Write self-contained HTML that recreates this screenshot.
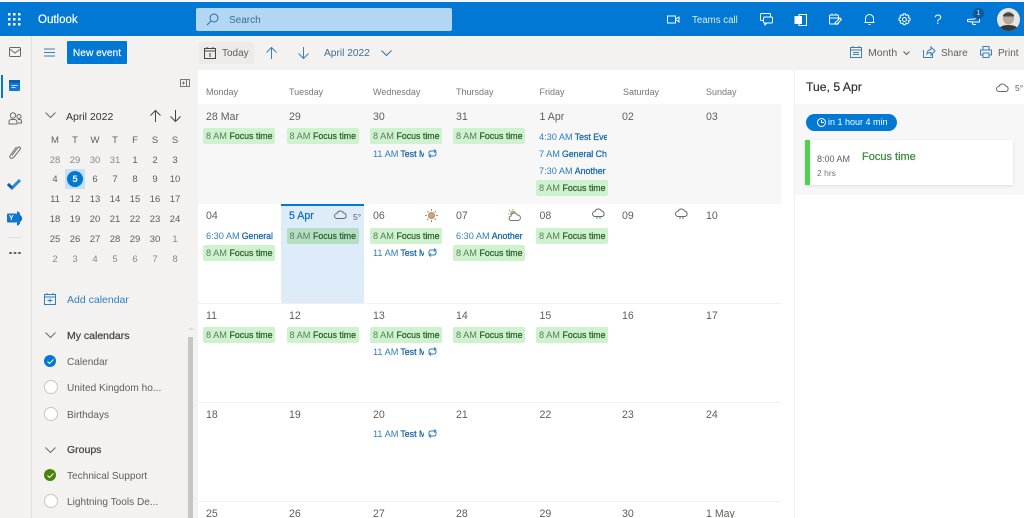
<!DOCTYPE html>
<html><head><meta charset="utf-8"><style>
html,body{margin:0;padding:0}
body{width:1024px;height:518px;overflow:hidden;position:relative;background:#fff;font-family:"Liberation Sans",sans-serif;color:#605e5c}
#w{position:absolute;inset:0;overflow:hidden;filter:blur(.3px)}
.a,.t,.c,.d,.f,.e,.h{position:absolute;white-space:nowrap}
.t{font-size:10.5px;line-height:14px}
.c{width:20px;text-align:center;font-size:9.5px;line-height:12px;color:#605e5c;margin-top:2px}
.c.m{color:#8a8886}
.d{font-size:10.6px;line-height:14px;color:#605e5c;margin-top:1px}
.h{font-size:9px;line-height:12px;color:#797775}
.f{width:72px;height:16px;background:#cef2ce;border-radius:2px;font-size:9.2px;line-height:16px;color:#5d7d5d;padding-left:3px;box-sizing:border-box;overflow:hidden}
.f b{font-weight:400;font-size:8.8px;color:#2b5d2b;-webkit-text-stroke:.25px #2b5d2b;margin-left:0}
.e{font-size:9.2px;line-height:14px;color:#2f7fbf;width:68px;overflow:hidden}
.e b{font-weight:400;font-size:8.8px;color:#1565a5;-webkit-text-stroke:.25px #1565a5;margin-left:2px}
svg{position:absolute;overflow:visible;fill:none}
.w{stroke:#fff;stroke-width:1}
.g{stroke:#6b6967;stroke-width:1}
.b{stroke:#3a7fb5;stroke-width:1}
.r{width:12px;height:12px;border-radius:50%;position:absolute;left:44px;background:#fff;border:1px solid #c8c6c4}
</style></head><body><div id="w">
<!-- top bar -->
<div class="a" style="left:0;top:0;width:1024px;height:2px;background:#f4f8fc"></div>
<div class="a" style="left:0;top:2px;width:1024px;height:34px;background:#0078d4"></div>
<svg style="left:8px;top:13px" width="12" height="12"><g fill="#fff"><rect x="0" y="0" width="2.500" height="2.500"/><rect x="5" y="0" width="2.500" height="2.500"/><rect x="10" y="0" width="2.500" height="2.500"/><rect x="0" y="5" width="2.500" height="2.500"/><rect x="5" y="5" width="2.500" height="2.500"/><rect x="10" y="5" width="2.500" height="2.500"/><rect x="0" y="10" width="2.500" height="2.500"/><rect x="5" y="10" width="2.500" height="2.500"/><rect x="10" y="10" width="2.500" height="2.500"/></g></svg>
<div class="t" style="left:38px;top:13px;font-size:11.5px;color:#fff;-webkit-text-stroke:.2px #fff">Outlook</div>
<div class="a" style="left:196px;top:8px;width:256px;height:23px;background:#b3d6f2;border-radius:2px"></div>
<svg style="left:206px;top:13px" width="13" height="13" stroke="#2a6ea8"><circle cx="8" cy="5" r="4"/><path d="M5 8L1 12"/></svg>
<div class="t" style="left:229px;top:12px;font-size:10px;line-height:14px;margin-top:2px;color:#33709f">Search</div>
<svg style="left:667px;top:15px" width="13" height="9" class="w"><rect x=".5" y="1" width="8" height="7"/><path d="M9 4l3-2v5l-3-2"/></svg>
<div class="t" style="left:692px;top:14px;font-size:9.700px;color:#dcecf9">Teams call</div>
<svg style="left:760px;top:13px" width="13" height="13" class="w"><rect x=".5" y=".5" width="10" height="7" rx="1"/><rect x="3.500" y="4" width="9" height="6" rx="1" fill="#0078d4"/><path d="M5 10v2l2-2"/></svg>
<svg style="left:795px;top:14px" width="12" height="12" class="w"><rect x="4" y=".5" width="7.500" height="11"/><rect x="0" y="2.500" width="6.500" height="7" fill="#fff"/></svg>
<svg style="left:829px;top:13px" width="13" height="13" class="w"><rect x=".5" y="2" width="9" height="9" rx="1"/><path d="M.5 5h9M3 .5v2M7 .5v2"/><path d="M6 10l5-5 1.500 1.500-5 5z" fill="#0078d4"/></svg>
<svg style="left:864px;top:13px" width="11" height="13" class="w"><path d="M1.500 9.500V5.500a4 4 0 018 0v4zM.5 9.500h10M4.500 11.500h2"/></svg>
<svg style="left:898px;top:13px" width="13" height="13" class="w"><circle cx="6.500" cy="6.500" r="2"/><path d="M5.500 .7h2l.5 1.700 1.600-.7 1.400 1.400-.7 1.600 1.700.5v2l-1.700.5.7 1.600-1.400 1.400-1.600-.7-.5 1.700h-2l-.5-1.700-1.600.7-1.400-1.400.7-1.600-1.700-.5v-2l1.700-.5-.7-1.600 1.400-1.400 1.600.7z"/></svg>
<div class="t" style="left:934px;top:12px;font-size:14px;color:#e6f2fb">?</div>
<svg style="left:967px;top:15px" width="14" height="10" class="w"><path d="M.5 4.500l7-.5 5-3v6H7L.5 6.500zM5 7.500l1 2h3"/></svg>
<div class="a" style="left:973px;top:8px;width:11px;height:11px;border-radius:50%;background:#0f5a96;color:#e6f2fb;font-size:7px;line-height:11px;text-align:center">1</div>
<svg style="left:997px;top:8px" width="23" height="23"><defs><clipPath id="av"><circle cx="11.500" cy="11.500" r="11.500"/></clipPath></defs><g clip-path="url(#av)"><rect width="23" height="23" fill="#e8e6e4"/><ellipse cx="11.500" cy="10" rx="5.500" ry="6.500" fill="#b5a89f"/><path d="M6 7q5.500-5 11 0v1.500H6z" fill="#4a4644"/><path d="M1 23q1-6 10.500-6T22 23z" fill="#3a3836"/></g></svg>

<!-- toolbar / background -->
<div class="a" style="left:0;top:36px;width:1024px;height:482px;background:#f3f2f1"></div>
<div class="a" style="left:31px;top:36px;width:1px;height:482px;background:#e1dfdd"></div>

<!-- rail -->
<svg style="left:9px;top:47px" width="12" height="11" class="g"><rect x=".5" y=".5" width="11" height="9" rx="1"/><path d="M.5 2l5.500 4 5.500-4"/></svg>
<div class="a" style="left:1px;top:75px;width:2px;height:23px;background:#0078d4"></div>
<svg style="left:9px;top:80px" width="11" height="12"><rect x="0" y="0" width="11" height="11" rx="1" fill="#0f78d4"/><rect x="0" y="0" width="11" height="3" fill="#0a5fb0"/><path d="M2.500 5.500h6M2.500 7.500h4" stroke="#cfe6fa" stroke-width="1"/></svg>
<svg style="left:8px;top:112px" width="14" height="13" class="g"><circle cx="5" cy="3.500" r="2.700"/><circle cx="11" cy="4.500" r="2"/><path d="M1 12V10q0-2.500 2.500-2.500h3Q9 7.500 9 10v2zM10 7.500h1.500q2 0 2 2V11H10"/></svg>
<svg style="left:9px;top:145px" width="12" height="14" class="g"><path d="M3 10.500l5.500-7.500q1.500-1.800 2.500-.8t-.3 2.600L5 12q-2 2-3.500 1T1.500 10L7.500 2"/></svg>
<svg style="left:7px;top:178px" width="15" height="12"><path d="M1 6l4 4 8-8" stroke="#2b88d8" stroke-width="3"/><path d="M1 6l4 4" stroke="#0f5fae" stroke-width="3"/></svg>
<svg style="left:7px;top:211px" width="16" height="15"><circle cx="11" cy="7.500" r="4" fill="#0a5fb0"/><path d="M10 0l3 2v11l-3 2z" fill="#0f78d4"/><rect x="0" y="2.500" width="10" height="9" rx="1" fill="#0f78d4"/></svg>
<div class="a" style="top:213px;color:#fff;font-size:7px;line-height:12px;font-weight:bold;left:9px">Y</div>
<div class="a" style="left:8px;top:237px;width:14px;height:1px;background:#e1dfdd"></div>
<div class="a" style="left:9px;top:252px;width:3px;height:2px;background:#605e5c;box-shadow:4.500px 0 #605e5c,9px 0 #605e5c;border-radius:1px"></div>

<!-- sidebar -->
<svg style="left:44px;top:48px" width="12" height="9" stroke="#3a7fb5"><path d="M0 1h11M0 4.500h11M0 8h11"/></svg>
<div class="a" style="left:67px;top:41px;width:60px;height:23px;background:#0078d4;border-radius:1px"></div>
<div class="a" style="left:67px;top:43px;width:60px;height:21px;color:#fff;font-size:10.200px;line-height:21px;text-align:center;-webkit-text-stroke:.15px #fff">New event</div>
<svg style="left:180px;top:79px" width="10" height="8" stroke="#797775"><rect x=".5" y=".5" width="9" height="7"/><path d="M6.500 .5v7M2 4h3M3.500 2.500v3"/></svg>
<svg style="left:45px;top:112px" width="11" height="6" class="g"><path d="M.5 .5l5 5 5-5"/></svg>
<div class="t" style="left:66px;top:110px;font-size:10.500px;color:#323130">April 2022</div>
<svg style="left:150px;top:110px" width="11" height="12" stroke="#484644"><path d="M5.500 12V.5M.5 5.500l5-5 5 5"/></svg>
<svg style="left:170px;top:110px" width="11" height="12" stroke="#484644"><path d="M5.500 0v11.500M.5 6.500l5 5 5-5"/></svg>
<div class="c" style="left:45px;top:133px">M</div><div class="c" style="left:65px;top:133px">T</div><div class="c" style="left:85px;top:133px">W</div><div class="c" style="left:105px;top:133px">T</div><div class="c" style="left:125px;top:133px">F</div><div class="c" style="left:145px;top:133px">S</div><div class="c" style="left:165px;top:133px">S</div>
<div class="c m" style="left:45px;top:153px">28</div><div class="c m" style="left:65px;top:153px">29</div><div class="c m" style="left:85px;top:153px">30</div><div class="c m" style="left:105px;top:153px">31</div><div class="c" style="left:125px;top:153px">1</div><div class="c" style="left:145px;top:153px">2</div><div class="c" style="left:165px;top:153px">3</div>
<div class="a" style="left:65px;top:169px;width:20px;height:20px;background:#c7e0f4;border:0"></div>
<div class="a" style="left:67px;top:171px;width:16px;height:16px;border-radius:50%;background:#0078d4"></div>
<div class="c" style="left:45px;top:172px">4</div><div class="c" style="left:65px;top:172px;color:#fff;font-weight:bold">5</div><div class="c" style="left:85px;top:172px">6</div><div class="c" style="left:105px;top:172px">7</div><div class="c" style="left:125px;top:172px">8</div><div class="c" style="left:145px;top:172px">9</div><div class="c" style="left:165px;top:172px">10</div>
<div class="c" style="left:45px;top:192px">11</div><div class="c" style="left:65px;top:192px">12</div><div class="c" style="left:85px;top:192px">13</div><div class="c" style="left:105px;top:192px">14</div><div class="c" style="left:125px;top:192px">15</div><div class="c" style="left:145px;top:192px">16</div><div class="c" style="left:165px;top:192px">17</div>
<div class="c" style="left:45px;top:212px">18</div><div class="c" style="left:65px;top:212px">19</div><div class="c" style="left:85px;top:212px">20</div><div class="c" style="left:105px;top:212px">21</div><div class="c" style="left:125px;top:212px">22</div><div class="c" style="left:145px;top:212px">23</div><div class="c" style="left:165px;top:212px">24</div>
<div class="c" style="left:45px;top:232px">25</div><div class="c" style="left:65px;top:232px">26</div><div class="c" style="left:85px;top:232px">27</div><div class="c" style="left:105px;top:232px">28</div><div class="c" style="left:125px;top:232px">29</div><div class="c" style="left:145px;top:232px">30</div><div class="c m" style="left:165px;top:232px">1</div>
<div class="c m" style="left:45px;top:252px">2</div><div class="c m" style="left:65px;top:252px">3</div><div class="c m" style="left:85px;top:252px">4</div><div class="c m" style="left:105px;top:252px">5</div><div class="c m" style="left:125px;top:252px">6</div><div class="c m" style="left:145px;top:252px">7</div><div class="c m" style="left:165px;top:252px">8</div>
<svg style="left:44px;top:293px" width="12" height="12" stroke="#2f7fbf"><rect x=".5" y="1.500" width="11" height="10"/><path d="M.5 4h11M3 0v2M9 0v2M3.500 7.500h5M6 5.500v4"/></svg>
<div class="t" style="left:67px;top:293px;font-size:10.500px;color:#2f7fbf">Add calendar</div>
<svg style="left:45px;top:332px" width="11" height="6" class="g"><path d="M.5 .5l5 5 5-5"/></svg>
<div class="t" style="left:67px;top:329px;font-size:10.500px;color:#484644;-webkit-text-stroke:.25px #484644">My calendars</div>
<div class="a" style="left:44px;top:355px;width:12px;height:12px;border-radius:50%;background:#0078d4"></div>
<svg style="left:47px;top:359px" width="7" height="5" stroke="#fff"><path d="M.5 2.500l2 2 4-4"/></svg>
<div class="t" style="left:67px;top:356px;font-size:10.100px">Calendar</div>
<div class="r" style="top:380px"></div>
<div class="t" style="left:67px;top:382px;font-size:10.100px">United Kingdom ho...</div>
<div class="r" style="top:407px"></div>
<div class="t" style="left:67px;top:409px;font-size:10.100px">Birthdays</div>
<svg style="left:45px;top:447px" width="11" height="6" class="g"><path d="M.5 .5l5 5 5-5"/></svg>
<div class="t" style="left:67px;top:443px;font-size:10.500px;color:#484644;-webkit-text-stroke:.25px #484644">Groups</div>
<div class="a" style="left:44px;top:469px;width:12px;height:12px;border-radius:50%;background:#498205"></div>
<svg style="left:47px;top:473px" width="7" height="5" stroke="#fff"><path d="M.5 2.500l2 2 4-4"/></svg>
<div class="t" style="left:67px;top:470px;font-size:10.100px">Technical Support</div>
<div class="r" style="top:494px"></div>
<div class="t" style="left:67px;top:496px;font-size:10.100px">Lightning Tools De...</div>
<div class="a" style="left:188px;top:337px;width:5px;height:181px;background:#c8c6c4"></div>
<svg style="left:188px;top:326px" width="6" height="4"><path d="M0 4l3-3 3 3z" fill="#dcdad8"/></svg>

<!-- calendar toolbar -->
<div class="a" style="left:199px;top:42px;width:55px;height:22px;background:#edebe9"></div>
<svg style="left:204px;top:47px" width="12" height="12" stroke="#484644"><rect x=".5" y="1.500" width="11" height="10"/><path d="M.5 4h11M3 0v2M9 0v2M6 6v4"/></svg>
<div class="t" style="left:222px;top:47px;font-size:10px;color:#605e5c">Today</div>
<svg style="left:266px;top:47px" width="11" height="12" stroke="#3a7fb5"><path d="M5.500 12V.5M.5 5.500l5-5 5 5"/></svg>
<svg style="left:298px;top:47px" width="11" height="12" stroke="#3a7fb5"><path d="M5.500 0v11.500M.5 6.500l5 5 5-5"/></svg>
<div class="t" style="left:324px;top:47px;font-size:10.200px;color:#3a6f9c">April 2022</div>
<svg style="left:381px;top:50px" width="11" height="6" stroke="#3a6f9c"><path d="M.5 .5l5 5 5-5"/></svg>
<svg style="left:850px;top:46px" width="12" height="12" stroke="#3a7fb5"><rect x=".5" y="1.500" width="11" height="10"/><path d="M.5 4h11M3 0v2M9 0v2M3 6.500h6M3 8.500h6"/></svg>
<div class="t" style="left:868px;top:46px;font-size:10.500px">Month</div>
<svg style="left:903px;top:51px" width="7" height="4" stroke="#605e5c"><path d="M.5 .5l3 3 3-3"/></svg>
<svg style="left:923px;top:46px" width="12" height="12" stroke="#3a7fb5"><path d="M.5 4v7.500h9V8M4 8q0-4 4-4.500V1l4 4-4 4V6.500q-3 0-4 1.500z"/></svg>
<div class="t" style="left:941px;top:47px;font-size:10px">Share</div>
<svg style="left:980px;top:46px" width="12" height="12" stroke="#3a7fb5"><path d="M3 4V.5h6V4M3 9H.5V4h11v5H9M3 7h6v4.500H3z"/></svg>
<div class="t" style="left:998px;top:47px;font-size:10px">Print</div>

<!-- calendar -->
<div class="a" style="left:198px;top:70px;width:596px;height:448px;background:#fff"></div>
<div class="a" style="left:198px;top:104px;width:583px;height:100px;background:#f8f7f7"></div>
<div class="a" style="left:198px;top:303px;width:583px;height:1px;background:#f1f0ef"></div>
<div class="a" style="left:198px;top:402px;width:583px;height:1px;background:#f1f0ef"></div>
<div class="a" style="left:198px;top:501px;width:583px;height:1px;background:#f1f0ef"></div>
<div class="a" style="left:281px;top:204px;width:83px;height:99px;background:#deecf9"></div>
<div class="a" style="left:281px;top:204px;width:83px;height:2px;background:#0078d4"></div>

<div class="h" style="left:206px;top:86px">Monday</div><div class="h" style="left:289px;top:86px">Tuesday</div><div class="h" style="left:373px;top:86px">Wednesday</div><div class="h" style="left:456px;top:86px">Thursday</div><div class="h" style="left:539.500px;top:86px">Friday</div><div class="h" style="left:623px;top:86px">Saturday</div><div class="h" style="left:706px;top:86px">Sunday</div>

<div class="d" style="left:206px;top:109px">28 Mar</div><div class="d" style="left:289px;top:109px">29</div><div class="d" style="left:373px;top:109px">30</div><div class="d" style="left:456px;top:109px">31</div><div class="d" style="left:539.500px;top:109px">1 Apr</div><div class="d" style="left:622px;top:109px">02</div><div class="d" style="left:706px;top:109px">03</div>
<div class="d" style="left:206px;top:208px">04</div><div class="d" style="left:289px;top:208px;color:#106ebe;-webkit-text-stroke:.25px #106ebe">5 Apr</div><div class="d" style="left:373px;top:208px">06</div><div class="d" style="left:456px;top:208px">07</div><div class="d" style="left:539.500px;top:208px">08</div><div class="d" style="left:622px;top:208px">09</div><div class="d" style="left:706px;top:208px">10</div>
<div class="d" style="left:206px;top:308px">11</div><div class="d" style="left:289px;top:308px">12</div><div class="d" style="left:373px;top:308px">13</div><div class="d" style="left:456px;top:308px">14</div><div class="d" style="left:539.500px;top:308px">15</div><div class="d" style="left:622px;top:308px">16</div><div class="d" style="left:706px;top:308px">17</div>
<div class="d" style="left:206px;top:407px">18</div><div class="d" style="left:289px;top:407px">19</div><div class="d" style="left:373px;top:407px">20</div><div class="d" style="left:456px;top:407px">21</div><div class="d" style="left:539.500px;top:407px">22</div><div class="d" style="left:622px;top:407px">23</div><div class="d" style="left:706px;top:407px">24</div>
<div class="d" style="left:206px;top:506px">25</div><div class="d" style="left:289px;top:506px">26</div><div class="d" style="left:373px;top:506px">27</div><div class="d" style="left:456px;top:506px">28</div><div class="d" style="left:539.500px;top:506px">29</div><div class="d" style="left:622px;top:506px">30</div><div class="d" style="left:706px;top:506px">1 May</div>

<!-- weather -->
<svg style="left:334px;top:210px" width="13" height="9" stroke="#6b6967"><path d="M3 8.500a2.500 2.500 0 010-5 3.500 3.500 0 016.500-.5 2.800 2.800 0 01.5 5.500z"/></svg>
<div class="t" style="left:353px;top:210px;font-size:8.500px">5°</div>
<svg style="left:425px;top:209px" width="13" height="13" stroke="#b09060"><circle cx="6.500" cy="6.500" r="3" fill="#c9a878"/><path d="M6.500 0v2M6.500 11v2M0 6.500h2M11 6.500h2M2 2l1.500 1.500M9.500 9.500L11 11M2 11l1.500-1.500M9.500 3.500L11 2"/></svg>
<svg style="left:508px;top:209px" width="14" height="12"><circle cx="5" cy="4.500" r="3" fill="#c9a878"/><path d="M5 0v1M1 1l1 1M0 5h1" stroke="#b09060"/><path d="M3 11.500a2.300 2.300 0 010-4.500 3.300 3.300 0 016.300-1 2.800 2.800 0 011 5.500z" stroke="#7a7876" fill="#fff"/></svg>
<svg style="left:592px;top:210px" width="13" height="11" stroke="#6b6967"><path d="M3 6.500a2.500 2.500 0 010-5 3.500 3.500 0 016.500-.5 2.800 2.800 0 01.5 5.500z"/><path d="M5 6v3M8 6v3" stroke="#2f7fbf"/></svg>
<svg style="left:675px;top:210px" width="13" height="11" stroke="#6b6967"><path d="M3 6.500a2.500 2.500 0 010-5 3.500 3.500 0 016.500-.5 2.800 2.800 0 01.5 5.500z"/><path d="M5 6v3M8 6v3" stroke="#2f7fbf"/></svg>

<!-- focus pills -->
<div class="f" style="left:203px;top:128px">8 AM <b>Focus time</b></div><div class="f" style="left:286.500px;top:128px">8 AM <b>Focus time</b></div><div class="f" style="left:370px;top:128px">8 AM <b>Focus time</b></div><div class="f" style="left:453px;top:128px">8 AM <b>Focus time</b></div><div class="f" style="left:536px;top:180px">8 AM <b>Focus time</b></div>
<div class="f" style="left:203px;top:245px">8 AM <b>Focus time</b></div><div class="f" style="left:286.500px;top:228px;background:#b4dfc4">8 AM <b>Focus time</b></div><div class="f" style="left:370px;top:228px">8 AM <b>Focus time</b></div><div class="f" style="left:453px;top:245px">8 AM <b>Focus time</b></div><div class="f" style="left:536px;top:228px">8 AM <b>Focus time</b></div>
<div class="f" style="left:203px;top:327px">8 AM <b>Focus time</b></div><div class="f" style="left:286.500px;top:327px">8 AM <b>Focus time</b></div><div class="f" style="left:370px;top:327px">8 AM <b>Focus time</b></div><div class="f" style="left:453px;top:327px">8 AM <b>Focus time</b></div><div class="f" style="left:536px;top:327px">8 AM <b>Focus time</b></div>

<!-- blue events -->
<div class="e" style="left:539px;top:129.500px">4:30 AM<b>Test Eve</b></div>
<div class="e" style="left:539px;top:147px">7 AM<b>General Ch</b></div>
<div class="e" style="left:539px;top:164px">7:30 AM<b>Another</b></div>
<div class="e" style="left:206px;top:229px">6:30 AM<b>General</b></div>
<div class="e" style="left:456px;top:229px">6:30 AM<b>Another</b></div>
<div class="e" style="left:373px;top:147px;width:51px">11 AM<b>Test M</b></div>
<div class="e" style="left:373px;top:246px;width:51px">11 AM<b>Test M</b></div>
<div class="e" style="left:373px;top:345px;width:51px">11 AM<b>Test M</b></div>
<div class="e" style="left:373px;top:427px;width:51px">11 AM<b>Test M</b></div>
<svg style="left:428px;top:149px" width="9" height="9" stroke="#2f7fbf"><path d="M1 6V4q0-2 2-2h5M6 .5L8 2 6 3.500M8 3v2q0 2-2 2H1M3 5.500L1 7l2 1.500"/></svg>
<svg style="left:428px;top:248px" width="9" height="9" stroke="#2f7fbf"><path d="M1 6V4q0-2 2-2h5M6 .5L8 2 6 3.500M8 3v2q0 2-2 2H1M3 5.500L1 7l2 1.500"/></svg>
<svg style="left:428px;top:347px" width="9" height="9" stroke="#2f7fbf"><path d="M1 6V4q0-2 2-2h5M6 .5L8 2 6 3.500M8 3v2q0 2-2 2H1M3 5.500L1 7l2 1.500"/></svg>
<svg style="left:428px;top:429px" width="9" height="9" stroke="#2f7fbf"><path d="M1 6V4q0-2 2-2h5M6 .5L8 2 6 3.500M8 3v2q0 2-2 2H1M3 5.500L1 7l2 1.500"/></svg>

<!-- right panel -->
<div class="a" style="left:794px;top:70px;width:230px;height:448px;background:#fff;border-left:1px solid #f1f0ef;box-sizing:border-box"></div>
<div class="a" style="left:795px;top:104px;width:229px;height:91px;background:#f8f7f7"></div>
<div class="t" style="left:806px;top:80px;font-size:12.200px;color:#323130;-webkit-text-stroke:.2px #323130">Tue, 5 Apr</div>
<svg style="left:996px;top:83px" width="13" height="9" stroke="#6b6967"><path d="M3 8.500a2.500 2.500 0 010-5 3.500 3.500 0 016.500-.5 2.800 2.800 0 01.5 5.500z"/></svg>
<div class="t" style="left:1015px;top:81px;font-size:8.500px">5°</div>
<div class="a" style="left:806px;top:113.500px;width:91px;height:17px;background:#0078d4;border-radius:9px"></div>
<svg style="left:817px;top:118px" width="9" height="9" stroke="#fff"><circle cx="4.500" cy="4.500" r="4"/><path d="M4.500 2v2.500H7"/></svg>
<div class="t" style="left:828px;top:115px;font-size:9px;color:#fff">in 1 hour 4 min</div>
<div class="a" style="left:805px;top:139.500px;width:208px;height:45px;background:#fff;box-shadow:0 1px 3px rgba(0,0,0,.12)"></div>
<div class="a" style="left:805px;top:139.500px;width:5px;height:45px;background:#4fd34f"></div>
<div class="t" style="left:817px;top:152px;font-size:9px">8:00 AM</div>
<div class="t" style="left:862px;top:150px;font-size:11px;color:#3d8b3d;-webkit-text-stroke:.25px #3d8b3d">Focus time</div>
<div class="t" style="left:817px;top:166px;font-size:8.500px;color:#797775">2 hrs</div>
</div></body></html>
